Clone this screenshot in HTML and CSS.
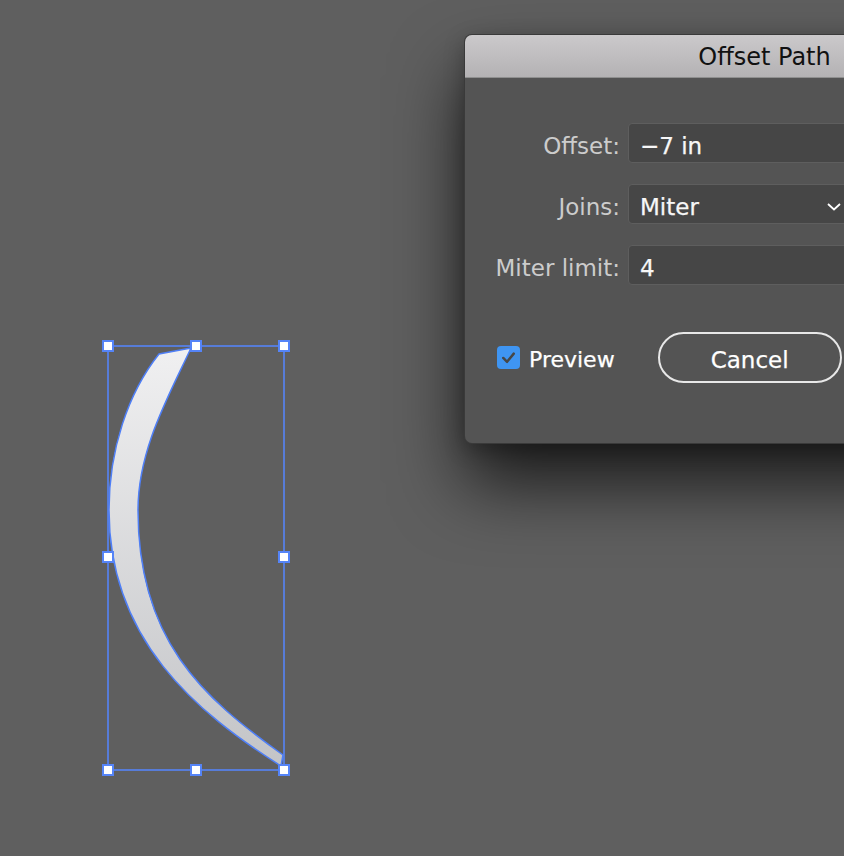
FILE: index.html
```html
<!DOCTYPE html>
<html lang="en">
<head>
<meta charset="utf-8">
<title>Offset Path</title>
<link rel="stylesheet" href="styles.css">
</head>
<body>
<div class="desk">
  <svg class="art" width="844" height="856" viewBox="0 0 844 856" xmlns="http://www.w3.org/2000/svg">
    <defs>
      <linearGradient id="fillg" x1="0" y1="0" x2="0" y2="1">
        <stop offset="0" stop-color="#f0f0f1"/>
        <stop offset="1" stop-color="#c3c4c7"/>
      </linearGradient>
    </defs>
    <path d="M159,354 C128,393 109,450 109,510 C109,640 196.5,712.4 281,766 L283,755 C202,697 138,640 138,510 C138,450 167.9,397.5 191,348 Z" fill="url(#fillg)" stroke="#4f7ff6" stroke-width="1.5" stroke-linejoin="miter"/>
    <rect x="108" y="346" width="176" height="424" fill="none" stroke="#5584f7" stroke-width="1.6"/>
    <g fill="#ffffff" stroke="#5584f7" stroke-width="2">
      <rect x="103" y="341" width="10" height="10"/>
      <rect x="191" y="341" width="10" height="10"/>
      <rect x="279" y="341" width="10" height="10"/>
      <rect x="103" y="552" width="10" height="10"/>
      <rect x="279" y="552" width="10" height="10"/>
      <rect x="103" y="765" width="10" height="10"/>
      <rect x="191" y="765" width="10" height="10"/>
      <rect x="279" y="765" width="10" height="10"/>
    </g>
  </svg>

  <div class="dialog">
    <div class="titlebar">Offset Path</div>
    <div class="dbody">
      <div class="form">
        <span class="lbl">Offset:</span>
        <div class="field">−7 in</div>
        <span class="lbl">Joins:</span>
        <div class="field select"><span>Miter</span>
          <svg class="chev" width="14" height="8" viewBox="0 0 14 8"><path d="M1 1 L7 6.5 L13 1" fill="none" stroke="#ffffff" stroke-width="1.8"/></svg>
        </div>
        <span class="lbl">Miter limit:</span>
        <div class="field">4</div>
      </div>
      <div class="actions">
        <span class="check">
          <span class="box"><svg width="24" height="24" viewBox="0 0 24 24"><path d="M6.5 12.5 L10.5 16.5 L17.5 8" fill="none" stroke="#474747" stroke-width="2.6" stroke-linecap="round" stroke-linejoin="round"/></svg></span>
          <span class="ctext">Preview</span>
        </span>
        <button class="btn">Cancel</button>
      </div>
    </div>
  </div>
</div>
</body>
</html>
```
FILE: styles.css
```css
html, body {
  margin: 0;
  padding: 0;
  background: #5f5f5f;
  overflow: hidden;
}
.desk {
  position: relative;
  width: 844px;
  height: 856px;
  overflow: hidden;
  font-family: "DejaVu Sans", "Liberation Sans", sans-serif;
}
.art {
  position: absolute;
  left: 0;
  top: 0;
}
.dialog {
  position: absolute;
  left: 464px;
  top: 34px;
  width: 601px;
  height: 410px;
  border-radius: 8px;
  background: #545454;
  border: 1px solid rgba(0, 0, 0, 0.3);
  box-sizing: border-box;
  box-shadow: 0 40px 70px rgba(0, 0, 0, 0.72), 0 6px 20px rgba(0, 0, 0, 0.25);
  overflow: hidden;
}
.titlebar {
  height: 42px;
  line-height: 45px;
  text-align: center;
  font-size: 24px;
  color: #111111;
  background: linear-gradient(#cbc9cb, #b4b2b4);
  border-bottom: 1px solid #8f8f8f;
}
.dbody {
  padding-top: 45px;
}
.form {
  display: grid;
  grid-template-columns: 155px 226px;
  column-gap: 8px;
  row-gap: 21px;
  align-items: center;
}
.lbl {
  text-align: right;
  font-size: 23px;
  color: #cccccc;
  padding-top: 6px;
}
.field {
  height: 40px;
  box-sizing: border-box;
  border: 1px solid #5e5e5e;
  border-radius: 4px;
  background: #464646;
  padding: 6px 12px 0 11px;
  display: flex;
  align-items: center;
  justify-content: space-between;
  font-size: 23px;
  color: #f7f7f7;
  -webkit-text-stroke: 0.25px #f7f7f7;
}
.chev {
  display: block;
}
.actions {
  display: flex;
  align-items: center;
  padding-left: 32px;
  margin-top: 47px;
}
.check {
  display: flex;
  align-items: center;
  gap: 9px;
}
.box {
  width: 23px;
  height: 23px;
  border-radius: 4px;
  background: #3f95f2;
  display: flex;
  align-items: center;
  justify-content: center;
}
.box svg {
  width: 23px;
  height: 23px;
}
.ctext {
  font-size: 22px;
  color: #ffffff;
  padding-top: 3px;
  -webkit-text-stroke: 0.25px #ffffff;
}
.btn {
  margin-left: 43px;
  width: 184px;
  height: 51px;
  border: 2px solid #e8e8e8;
  border-radius: 26px;
  background: transparent;
  color: #ffffff;
  font-family: "DejaVu Sans", "Liberation Sans", sans-serif;
  font-size: 23px;
  padding: 4px 0 0 0;
  -webkit-text-stroke: 0.25px #ffffff;
}
```
